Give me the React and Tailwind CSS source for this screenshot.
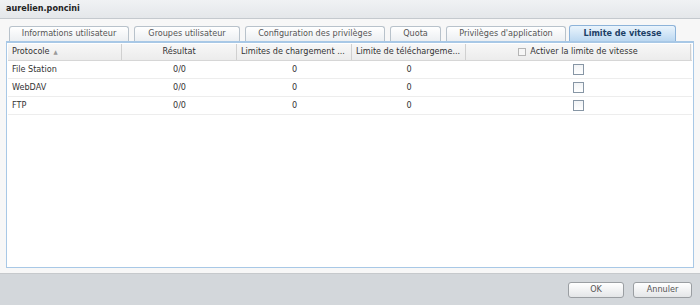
import React from "react";

const font = { fontFamily: '"DejaVu Sans Condensed", "DejaVu Sans", Verdana, sans-serif' };

function Tab({ label, active, w }) {
  if (active) {
    return (
      <div
        className={`h-[16px] mt-[1px] flex items-center justify-center whitespace-nowrap rounded-t-[3px] border border-b-0 border-[#8db3d9] bg-gradient-to-b from-[#eaf4fc] to-[#bcd8f1] text-[#1c3f66] font-bold text-[9px] ${w}`}
      >
        {label}
      </div>
    );
  }
  return (
    <div
      className={`h-[15px] mt-[1px] flex items-center justify-center whitespace-nowrap rounded-t-[3px] border border-b-0 border-[#b8c2cb] bg-gradient-to-b from-[#ffffff] to-[#eceff2] text-[#555] text-[9px] ${w}`}
    >
      {label}
    </div>
  );
}

function Checkbox() {
  return (
    <div className="w-[11px] h-[11px] border border-[#8796a5] bg-gradient-to-b from-[#f2f4f6] to-[#ffffff]" />
  );
}

const rows = ["File Station", "WebDAV", "FTP"];

export default function App() {
  return (
    <div
      className="w-[700px] h-[305px] flex flex-col bg-[#f7f7f7] overflow-hidden text-[9px] text-[#333]"
      style={font}
    >
      <div className="h-[19px] shrink-0 border-b border-[#c4c9ce] bg-gradient-to-b from-[#f0f2f4] to-[#e4e7ea] flex items-center px-[6px] font-bold text-[9px] text-[#222]">
        aurelien.poncini
      </div>
      <div className="flex-1 flex flex-col px-[6px] pt-[5px] pb-[5px]">
        <div className="h-[17px] flex items-end pl-[3px] gap-[5px]">
          <Tab label="Informations utilisateur" w="w-[120px]" />
          <Tab label="Groupes utilisateur" w="w-[106px]" />
          <Tab label="Configuration des privilèges" w="w-[140px]" />
          <Tab label="Quota" w="w-[51px]" />
          <Tab label="Privilèges d'application" w="w-[120px]" />
          <div className="ml-[-2px] h-[17px]">
            <Tab label="Limite de vitesse" active w="w-[107px]" />
          </div>
        </div>
        <div className="flex-1 border border-[#a8c8e6] border-t-[2px] border-t-[#a8c8e6] bg-white flex flex-col pt-[1px] px-[1px]">
          <div className="h-[17px] flex bg-gradient-to-b from-[#f7f7f7] to-[#ececec] border-b border-[#d6d6d6] text-[#333] whitespace-nowrap">
            <div className="w-[114px] border-r border-[#d0d0d0] flex items-center pl-[4px] gap-[4px]">
              Protocole
              <span className="text-[6px] text-[#999] leading-none">▲</span>
            </div>
            <div className="w-[115px] border-r border-[#d0d0d0] flex items-center justify-center">
              Résultat
            </div>
            <div className="w-[115px] border-r border-[#d0d0d0] flex items-center pl-[4px] overflow-hidden">
              Limites de chargement ...
            </div>
            <div className="w-[114px] border-r border-[#d0d0d0] flex items-center pl-[4px] overflow-hidden">
              Limite de téléchargeme...
            </div>
            <div className="w-[225px] border-r border-[#d0d0d0] flex items-center justify-center gap-[4px]">
              <div className="w-[8px] h-[8px] border border-[#b5b5b5] bg-[#f6f6f6]" />
              Activer la limite de vitesse
            </div>
          </div>
          {rows.map((r) => (
            <div key={r} className="h-[18px] flex border-b border-[#ededed] text-[#333]">
              <div className="w-[114px] flex items-center pl-[4px]">{r}</div>
              <div className="w-[115px] flex items-center justify-center">0/0</div>
              <div className="w-[115px] flex items-center justify-center">0</div>
              <div className="w-[114px] flex items-center justify-center">0</div>
              <div className="w-[225px] flex items-center justify-center">
                <Checkbox />
              </div>
            </div>
          ))}
        </div>
      </div>
      <div className="h-[32px] shrink-0 border-t border-[#c6c9cc] bg-[#d3d7db] flex items-center justify-end gap-[9px] pr-[8px]">
        <button className="w-[56px] h-[16px] rounded-[3px] border border-[#9a9ea2] bg-gradient-to-b from-[#ffffff] to-[#e4e6e8] text-[9px] text-[#555] flex items-center justify-center">
          OK
        </button>
        <button className="w-[59px] h-[16px] rounded-[3px] border border-[#9a9ea2] bg-gradient-to-b from-[#ffffff] to-[#e4e6e8] text-[9px] text-[#555] flex items-center justify-center">
          Annuler
        </button>
      </div>
    </div>
  );
}
